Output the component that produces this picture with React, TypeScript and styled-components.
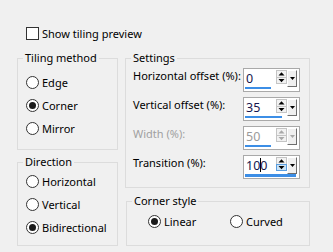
import styled, { createGlobalStyle } from 'styled-components';

const GlobalStyle = createGlobalStyle`
  html, body {
    margin: 0;
    padding: 0;
    background: #f0f0f0;
  }
  body {
    font-family: "Noto Sans", "Open Sans", sans-serif;
    font-size: 11px;
    color: #000000;
  }
`;

const Page = styled.div`
  width: 333px;
  height: 252px;
  box-sizing: border-box;
  padding: 27px 0 0 17px;
`;

const CheckRow = styled.label`
  display: flex;
  align-items: center;
  gap: 3px;
  height: 13px;
  margin-left: 9px;
  line-height: 16px;
`;

const CheckBox = styled.span`
  width: 13px;
  height: 13px;
  box-sizing: border-box;
  border: 1px solid #333333;
  background: #ffffff;
`;

const Columns = styled.div`
  display: flex;
  gap: 7px;
  margin-top: 10px;
`;

const Column = styled.div<{ $w: number; $gap: number }>`
  width: ${(p) => p.$w}px;
  display: flex;
  flex-direction: column;
  gap: ${(p) => p.$gap}px;
`;

const Group = styled.fieldset<{ $h: number; $indent?: number }>`
  margin: 0 0 0 ${(p) => p.$indent ?? 0}px;
  padding: 0;
  min-width: 0;
  height: ${(p) => p.$h}px;
  box-sizing: border-box;
  border: 1px solid #dcdcdc;
`;

const Legend = styled.legend`
  margin-left: 5px;
  padding: 0 2px;
  line-height: 16px;
`;

const GroupBody = styled.div<{ $pt: number; $pl: number }>`
  padding: ${(p) => p.$pt}px 0 0 ${(p) => p.$pl}px;
`;

const RadioRow = styled.div<{ $w?: number }>`
  display: flex;
  align-items: center;
  gap: 3px;
  height: 23px;
  width: ${(p) => (p.$w ? `${p.$w}px` : 'auto')};
  line-height: 16px;
`;

const RadioLine = styled.div`
  display: flex;
`;

const Circle = styled.span<{ $on?: boolean }>`
  width: 13px;
  height: 13px;
  box-sizing: border-box;
  border: 1px solid #333333;
  border-radius: 50%;
  background: #ffffff;
  display: flex;
  align-items: center;
  justify-content: center;
  &::after {
    content: '';
    width: 7px;
    height: 7px;
    border-radius: 50%;
    background: #1a1a1a;
    display: ${(p) => (p.$on ? 'block' : 'none')};
  }
`;

const SettingsGrid = styled.div`
  display: grid;
  grid-template-columns: 110px 57px;
  row-gap: 5px;
  padding: 2px 9px 0 7px;
`;

const Label = styled.span<{ $off?: boolean }>`
  line-height: 16px;
  color: ${(p) => (p.$off ? '#a0a0a0' : '#000000')};
  white-space: nowrap;
`;

const SpinBox = styled.div`
  width: 57px;
  height: 24px;
  box-sizing: border-box;
  border: 1px solid #a9a9a9;
  background: #ffffff;
  padding-top: 1px;
  display: flex;
  flex-direction: column;
`;

const SpinTop = styled.div`
  display: flex;
  height: 17px;
`;

const Value = styled.span<{ $off?: boolean }>`
  flex: 1;
  padding-left: 2px;
  font-size: 12.5px;
  line-height: 18px;
  color: ${(p) => (p.$off ? '#9a9a9a' : '#16164e')};
`;

const Caret = styled.span`
  display: inline-block;
  width: 1px;
  height: 14px;
  margin: 0 -1px 0 0;
  vertical-align: -2px;
  background: #000000;
`;

const DropButton = styled.span`
  width: 10px;
  height: 17px;
  margin-right: 2px;
  box-sizing: border-box;
  background: #f0f0f0;
  border-top: 1px solid #ffffff;
  border-left: 1px solid #ffffff;
  border-right: 1px solid #6e6e6e;
  border-bottom: 1px solid #6e6e6e;
  display: flex;
  align-items: center;
  justify-content: center;
`;

const Bar = styled.span<{ $thick?: boolean }>`
  display: block;
  height: ${(p) => (p.$thick ? 3 : 2)}px;
  margin-left: 1px;
  background: #3c8ee6;
`;

function Spinner({ off, hot }: { off?: boolean; hot?: boolean }) {
  const ink = off ? '#a8a8a8' : '#000000';
  return (
    <svg width="11" height="14" viewBox="0 0 11 14">
      <rect x="0.5" y="0.5" width="10" height="13" fill="#f2f2f2" stroke="#c4c4c4" />
      {hot && <rect x="0.5" y="7.5" width="10" height="6" fill="#cce4f7" stroke="#5a9ee0" />}
      <line x1="0.5" y1="7.5" x2="10.5" y2="7.5" stroke={hot ? '#5a9ee0' : '#c4c4c4'} />
      <polygon points="2.5,5.5 8.5,5.5 5.5,2.2" fill={ink} />
      <polygon points="2.5,9 8.5,9 5.5,12.2" fill={ink} />
    </svg>
  );
}

function Spin({
  value,
  bar,
  off,
  focused,
}: {
  value: string;
  bar: number;
  off?: boolean;
  focused?: boolean;
}) {
  return (
    <SpinBox>
      <SpinTop>
        <Value $off={off}>
          {focused ? (
            <>
              {value.slice(0, 2)}
              <Caret />
              {value.slice(2)}
            </>
          ) : (
            value
          )}
        </Value>
        <Spinner off={off} hot={focused} />
        <DropButton>
          <svg width="5" height="3" viewBox="0 0 5 3">
            <polygon points="0,0 5,0 2.5,3" fill={off ? '#a8a8a8' : '#000000'} />
          </svg>
        </DropButton>
      </SpinTop>
      <Bar $thick={focused} style={{ width: bar }} />
    </SpinBox>
  );
}

function Radio({ label, on, w }: { label: string; on?: boolean; w?: number }) {
  return (
    <RadioRow $w={w}>
      <Circle $on={on} />
      <span>{label}</span>
    </RadioRow>
  );
}

export default function App() {
  return (
    <>
      <GlobalStyle />
      <Page>
        <CheckRow>
          <CheckBox />
          <span>Show tiling preview</span>
        </CheckRow>
        <Columns>
          <Column $w={101} $gap={4}>
            <Group $h={100}>
              <Legend>Tiling method</Legend>
              <GroupBody $pt={5} $pl={8}>
                <Radio label="Edge" />
                <Radio label="Corner" on />
                <Radio label="Mirror" />
              </GroupBody>
            </Group>
            <Group $h={92}>
              <Legend>Direction</Legend>
              <GroupBody $pt={0} $pl={8}>
                <Radio label="Horizontal" />
                <Radio label="Vertical" />
                <Radio label="Bidirectional" on />
              </GroupBody>
            </Group>
          </Column>
          <Column $w={185} $gap={5}>
            <Group $h={138}>
              <Legend>Settings</Legend>
              <SettingsGrid>
                <Label>Horizontal offset (%):</Label>
                <Spin value="0" bar={26} />
                <Label>Vertical offset (%):</Label>
                <Spin value="35" bar={37} />
                <Label $off>Width (%):</Label>
                <Spin value="50" bar={26} off />
                <Label>Transition (%):</Label>
                <Spin value="100" bar={51} focused />
              </SettingsGrid>
            </Group>
            <Group $h={53} $indent={1}>
              <Legend>Corner style</Legend>
              <GroupBody $pt={1} $pl={21}>
                <RadioLine>
                  <Radio label="Linear" on w={82} />
                  <Radio label="Curved" />
                </RadioLine>
              </GroupBody>
            </Group>
          </Column>
        </Columns>
      </Page>
    </>
  );
}
